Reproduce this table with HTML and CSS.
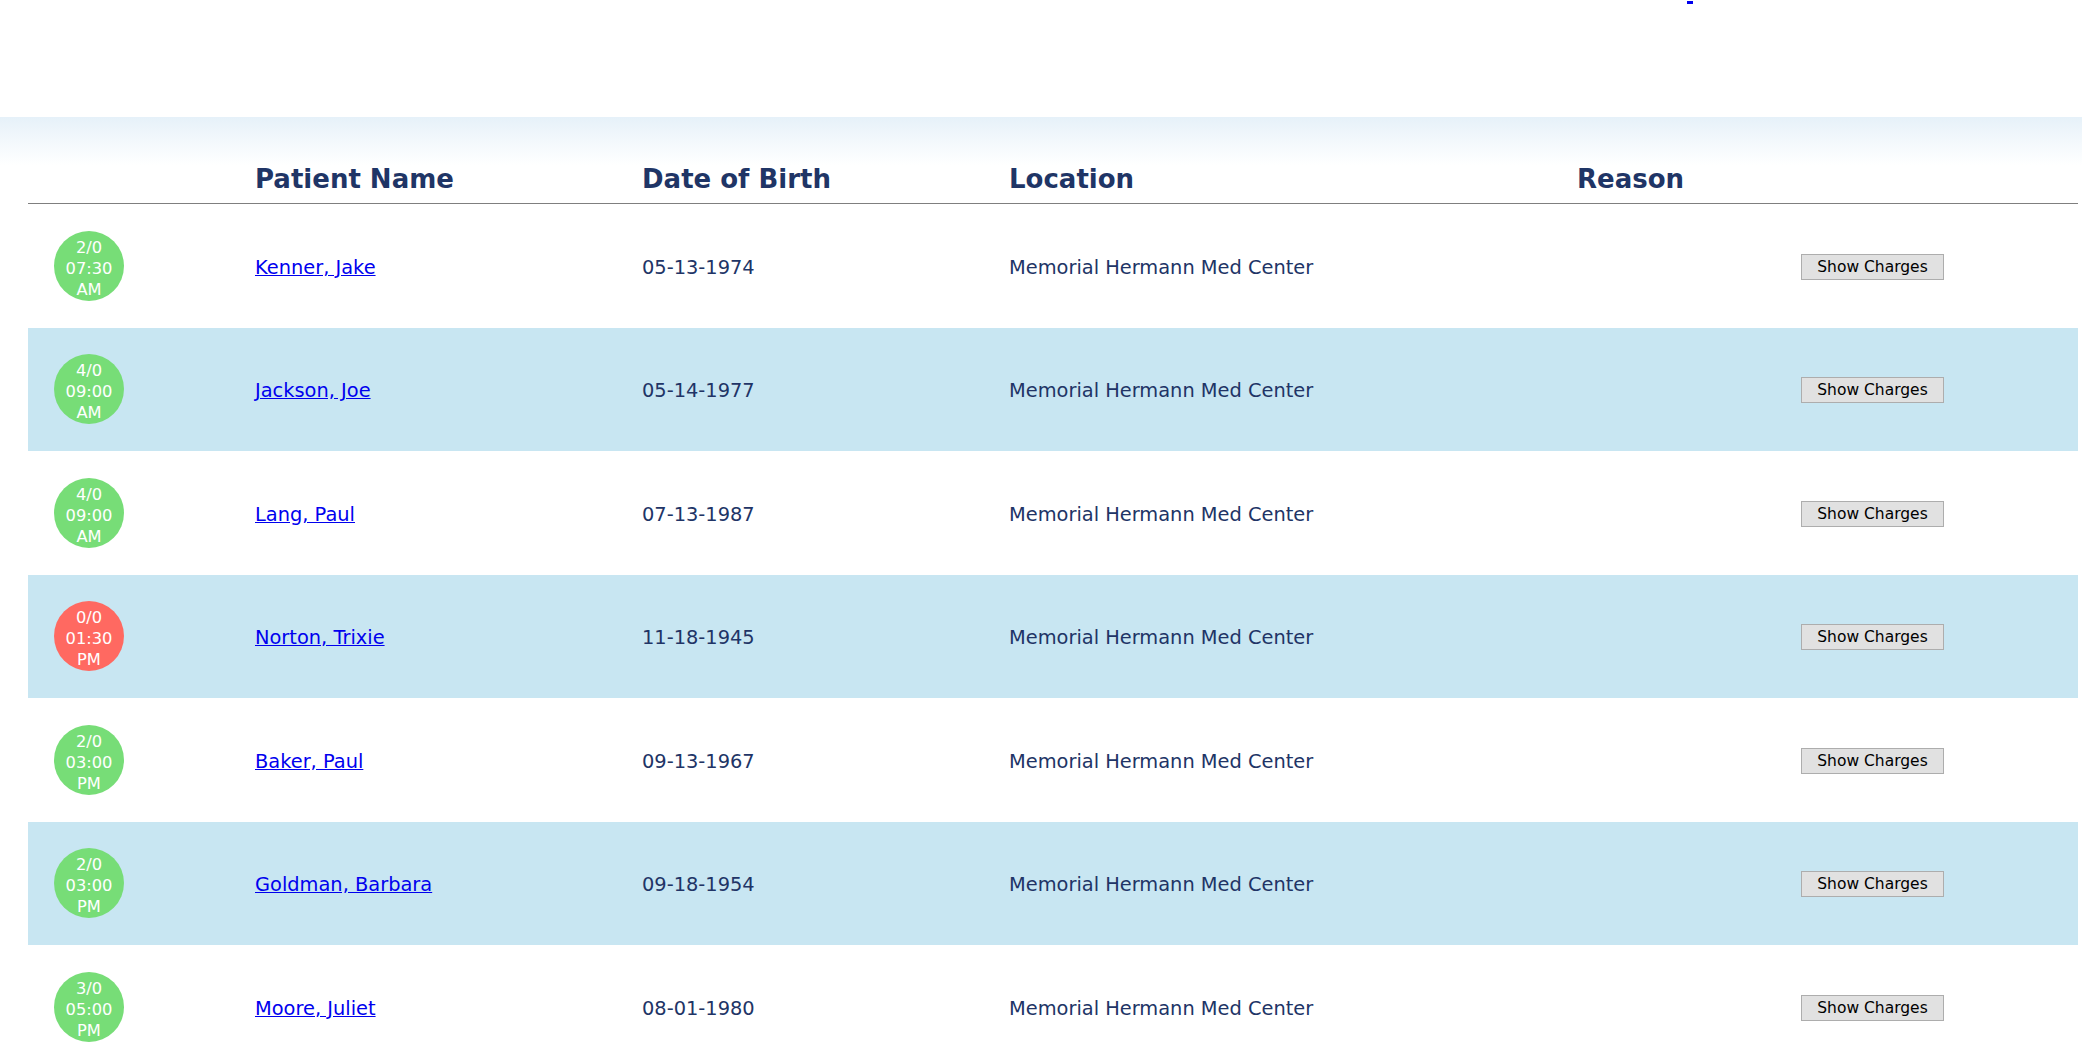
FILE: index.html
```html
<!DOCTYPE html>
<html lang="en">
<head>
<meta charset="utf-8">
<title>Schedule</title>
<link rel="stylesheet" href="styles.css">
</head>
<body>
<div class="topbar"><span class="topmark"></span></div>
<div class="band">
  <div class="grid head">
    <div></div>
    <div>Patient Name</div>
    <div>Date of Birth</div>
    <div>Location</div>
    <div>Reason</div>
    <div></div>
  </div>
  <div class="grid row">
    <div class="c-status"><span class="dot ok">2/0<br>07:30<br>AM</span></div>
    <div class="cell"><a href="#">Kenner, Jake</a></div>
    <div class="cell">05-13-1974</div>
    <div class="cell">Memorial Hermann Med Center</div>
    <div class="cell"></div>
    <div><button class="btn">Show Charges</button></div>
  </div>
  <div class="grid row alt">
    <div class="c-status"><span class="dot ok">4/0<br>09:00<br>AM</span></div>
    <div class="cell"><a href="#">Jackson, Joe</a></div>
    <div class="cell">05-14-1977</div>
    <div class="cell">Memorial Hermann Med Center</div>
    <div class="cell"></div>
    <div><button class="btn">Show Charges</button></div>
  </div>
  <div class="grid row">
    <div class="c-status"><span class="dot ok">4/0<br>09:00<br>AM</span></div>
    <div class="cell"><a href="#">Lang, Paul</a></div>
    <div class="cell">07-13-1987</div>
    <div class="cell">Memorial Hermann Med Center</div>
    <div class="cell"></div>
    <div><button class="btn">Show Charges</button></div>
  </div>
  <div class="grid row alt">
    <div class="c-status"><span class="dot bad">0/0<br>01:30<br>PM</span></div>
    <div class="cell"><a href="#">Norton, Trixie</a></div>
    <div class="cell">11-18-1945</div>
    <div class="cell">Memorial Hermann Med Center</div>
    <div class="cell"></div>
    <div><button class="btn">Show Charges</button></div>
  </div>
  <div class="grid row">
    <div class="c-status"><span class="dot ok">2/0<br>03:00<br>PM</span></div>
    <div class="cell"><a href="#">Baker, Paul</a></div>
    <div class="cell">09-13-1967</div>
    <div class="cell">Memorial Hermann Med Center</div>
    <div class="cell"></div>
    <div><button class="btn">Show Charges</button></div>
  </div>
  <div class="grid row alt">
    <div class="c-status"><span class="dot ok">2/0<br>03:00<br>PM</span></div>
    <div class="cell"><a href="#">Goldman, Barbara</a></div>
    <div class="cell">09-18-1954</div>
    <div class="cell">Memorial Hermann Med Center</div>
    <div class="cell"></div>
    <div><button class="btn">Show Charges</button></div>
  </div>
  <div class="grid row">
    <div class="c-status"><span class="dot ok">3/0<br>05:00<br>PM</span></div>
    <div class="cell"><a href="#">Moore, Juliet</a></div>
    <div class="cell">08-01-1980</div>
    <div class="cell">Memorial Hermann Med Center</div>
    <div class="cell"></div>
    <div><button class="btn">Show Charges</button></div>
  </div>
</div>
</body>
</html>
```
FILE: styles.css
```css
html {
  overflow: hidden;
}
body {
  margin: 0;
  font-family: "DejaVu Sans", Verdana, sans-serif;
  color: #213466;
  background: #fff;
}
.topbar {
  height: 117px;
  display: flex;
  align-items: flex-start;
  padding-left: 1687px;
}
.topmark {
  display: block;
  width: 6px;
  height: 3px;
  margin-top: 1px;
  background: #0000ee;
}
.band {
  padding: 0 4px 0 28px;
  background: linear-gradient(to bottom, #e6f1f9 0, #f6fafd 30px, #fff 48px);
}
.grid {
  display: grid;
  grid-template-columns: 227px 387px 367px 568px 224px 1fr;
}
.head {
  padding-top: 46.5px;
  padding-bottom: 9.5px;
  line-height: 30px;
  font-size: 26px;
  font-weight: bold;
  color: #1f3566;
  border-bottom: 1px solid #7f7f7f;
}
.row {
  height: 123.5px;
  align-items: center;
  font-size: 19.4px;
}
.row.alt {
  background: #c8e6f2;
}
.cell {
  padding-top: 3px;
}
.row a {
  color: #0000ee;
  text-decoration: underline;
}
.c-status {
  padding-left: 26px;
}
.dot {
  width: 70px;
  height: 70px;
  box-sizing: border-box;
  padding-top: 5px;
  border-radius: 50%;
  display: flex;
  align-items: center;
  justify-content: center;
  text-align: center;
  color: #fff;
  font-size: 16.3px;
  line-height: 21px;
}
.dot.ok {
  background: #77dd77;
}
.dot.bad {
  background: #ff6961;
}
.btn {
  display: block;
  font-family: "DejaVu Sans", Verdana, sans-serif;
  font-size: 15.5px;
  line-height: 18px;
  color: #000;
  background: #e1e1e1;
  border: 1px solid #adadad;
  border-radius: 0;
  padding: 3px 0;
  width: 143px;
  height: 26px;
  margin: 2px 0 0;
}
```
